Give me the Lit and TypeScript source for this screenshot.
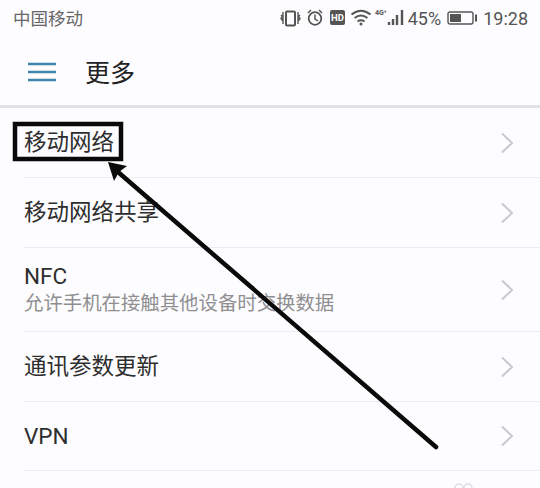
import { LitElement, html, css, svg } from "lit";
import { customElement } from "lit/decorators.js";

const rows = [
  { title: "移动网络", h: 70 },
  { title: "移动网络共享", h: 70 },
  { title: "NFC", sub: "允许手机在接触其他设备时交换数据", h: 84 },
  { title: "通讯参数更新", h: 70 },
  { title: "VPN", h: 69 },
];

@customElement("app-root")
export class AppRoot extends LitElement {
  static styles = css`
    :host {
      display: block;
      position: relative;
      width: 540px;
      height: 488px;
      overflow: hidden;
      background: #fdfcfe;
      font-family: "Roboto", "Noto Sans CJK SC", sans-serif;
      color: #2a2a2a;
    }
    .status {
      height: 38px;
      display: flex;
      align-items: center;
      justify-content: space-between;
      padding: 0 12px 0 13px;
      color: #666;
      font-size: 17.5px;
      box-sizing: border-box;
    }
    .carrier { margin-bottom: 3px; }
    .status-right { display: flex; align-items: center; color: #555; }
    .status-right svg { display: block; }
    .pct { font-size: 18px; margin: 0 6px 2px 3px; }
    .time { font-size: 18px; margin: 0 0 2px 6px; }
    .battery { margin-bottom: 2px; }
    .head {
      height: 67px;
      display: flex;
      align-items: center;
      padding: 0 0 0 28px;
      gap: 29px;
      border-bottom: 3px solid #e2e1e3;
    }
    .head .title { font-size: 25px; color: #222; margin-bottom: 2px; }
    .row {
      margin-left: 24px;
      padding-right: 26px;
      display: flex;
      align-items: center;
      justify-content: space-between;
      border-bottom: 1px solid #eceaee;
      box-sizing: border-box;
    }
    .t { font-size: 22.5px; line-height: 27px; color: #2e2e2e; }
    .s { font-size: 19.4px; line-height: 26px; margin-top: 1px; color: #8f8f91; }
    .overlay { position: absolute; left: 0; top: 0; pointer-events: none; }
  `;

  private chevron() {
    return html`<svg width="14" height="22" viewBox="0 0 14 22"><path d="M2 1.5 L12 11 L2 20.500" fill="none" stroke="#c9c8cb" stroke-width="2"/></svg>`;
  }

  render() {
    return html`
      <div class="status">
        <span class="carrier">中国移动</span>
        <div class="status-right">
          <svg width="125" height="38" viewBox="282 0 125 38" fill="none" stroke="#555">
            <rect x="288" y="11.500" width="9" height="14" rx="1" stroke-width="2"/>
            <path d="M285 12v12M283 15l1.500 1.500-1.500 2 1.500 2M300 12v12M302 15l-1.500 1.500 1.500 2-1.500 2" stroke-width="1.400"/>
            <circle cx="317" cy="18.500" r="6.300" stroke-width="1.800"/>
            <path d="M317 14.500v4.500l3 2M310 13l3-3M324 13l-3-3" stroke-width="1.500"/>
            <rect x="332" y="10" width="15" height="15" rx="2" fill="#555" stroke="none"/>
            <text x="339.500" y="21" font-family="Roboto" font-size="9.500" font-weight="700" fill="#fff" stroke="none" text-anchor="middle">HD</text>
            <path d="M353.500 14.500q9.500-7.500 19 0M356.500 18q6.500-5 13 0M359.500 21.500q3.500-2.500 7 0" stroke-width="2"/>
            <circle cx="363" cy="24" r="1.500" fill="#555" stroke="none"/>
            <text x="377" y="15" font-family="Roboto" font-size="7" font-weight="700" fill="#555" stroke="none">4G⁺</text>
            <path d="M391 25v-3M395 25v-6M399 25v-10M404 25v-15" stroke-width="2.400"/>
          </svg>
          <span class="pct">45%</span>
          <svg class="battery" width="30" height="14" viewBox="0 0 30 14">
            <rect x="1" y="1" width="25" height="12" rx="2" fill="none" stroke="#555" stroke-width="1.400"/>
            <rect x="3" y="3" width="11" height="8" fill="#555"/>
            <rect x="28" y="3.500" width="2" height="7" fill="#555"/>
          </svg>
          <span class="time">19:28</span>
        </div>
      </div>
      <div class="head">
        <svg width="28" height="22" viewBox="0 0 28 22">
          <path d="M0 3H28M0 11H28M0 19H28" stroke="#3f88ad" stroke-width="2.600"/>
        </svg>
        <span class="title">更多</span>
      </div>
      ${rows.map(
        (r) => html`<div class="row" style="height:${r.h}px">
          <div>
            <div class="t">${r.title}</div>
            ${r.sub ? html`<div class="s">${r.sub}</div>` : ""}
          </div>
          ${this.chevron()}
        </div>`
      )}
      <svg class="overlay" width="540" height="488" viewBox="0 0 540 488">
        ${svg`<rect x="15" y="124" width="106" height="35" fill="none" stroke="#0a0a0a" stroke-width="4.500"/>
        <path d="M436 447 L118 172" stroke="#0a0a0a" stroke-width="4.500" stroke-linecap="round"/>
        <path d="M108 162 L127 166 L119 172 L114 181 Z" fill="#0a0a0a"/>
        <path d="M455 488a4 4 0 0 1 8 0M464 488a4 4 0 0 1 8 0" fill="none" stroke="#dedde0" stroke-width="1.500"/>`}
      </svg>
    `;
  }
}
